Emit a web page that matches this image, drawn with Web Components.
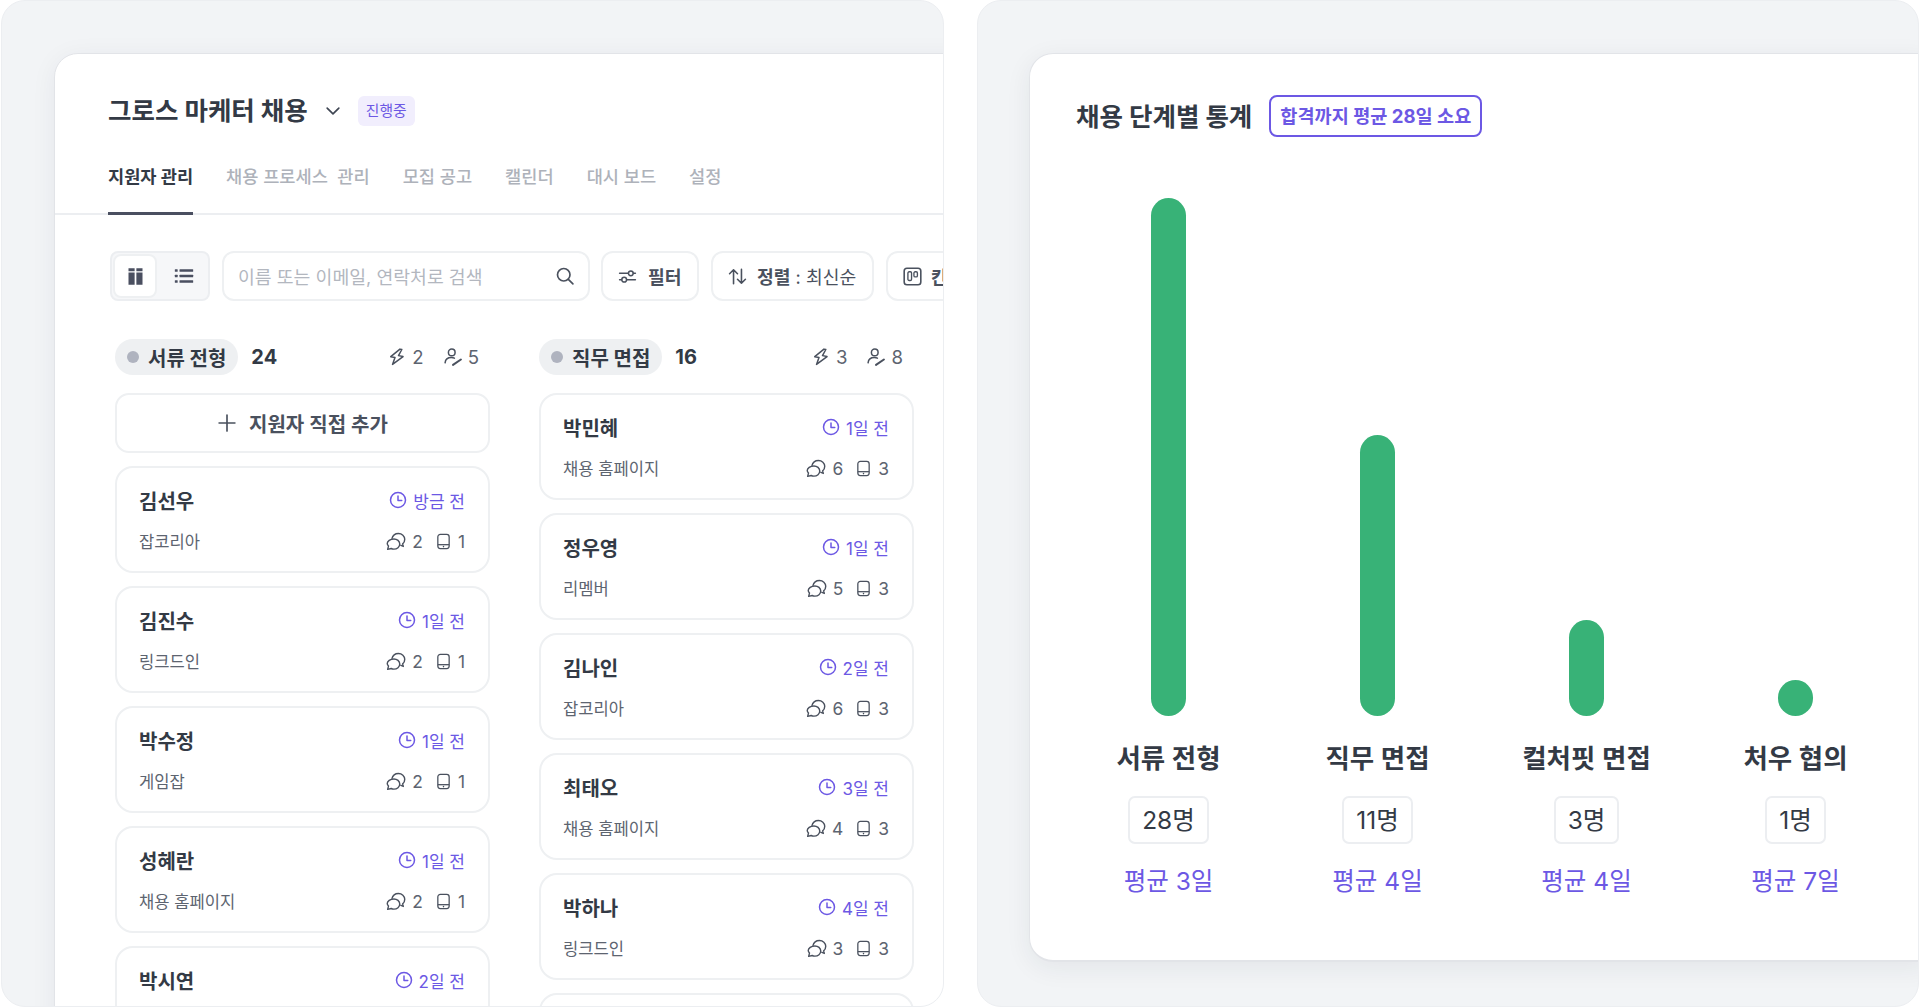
<!DOCTYPE html>
<html lang="ko">
<head>
<meta charset="utf-8">
<title>채용</title>
<style>
    html,body{margin:0;height:100%;background:#fff;overflow:hidden;}
    body{font-family:Inter,"Noto Sans CJK KR",sans-serif;color:#333a45;}
    main{display:flex;gap:33px;height:1007px;padding:0 1px 0 1px;box-sizing:border-box;}
</style>
</head>
<body>
<main>
    <frame-panel style="width:943px">
        <recruit-board></recruit-board>
    </frame-panel>
    <frame-panel style="flex:1">
        <stage-chart></stage-chart>
    </frame-panel>
</main>

<script>
const icons={
    chevron:'<path d="M5 8.5l7 7 7-7" fill="none" stroke="currentColor" stroke-width="2" stroke-linecap="round" stroke-linejoin="round"/>',
    columns:'<path fill="currentColor" d="M4 2.500h7v3.600H4zM4 7.300h7v14.200H4zM13 2.500h7v3.600h-7zM13 7.300h7v14.200h-7z"/>',
    list:'<g fill="currentColor"><rect x="1" y="4" width="3.400" height="2.800" rx=".6"/><rect x="1" y="10.600" width="3.400" height="2.800" rx=".6"/><rect x="1" y="17.200" width="3.400" height="2.800" rx=".6"/><rect x="6.600" y="4" width="16.400" height="2.800" rx=".6"/><rect x="6.600" y="10.600" width="16.400" height="2.800" rx=".6"/><rect x="6.600" y="17.200" width="16.400" height="2.800" rx=".6"/></g>',
    search:'<g fill="none" stroke="currentColor" stroke-width="2" stroke-linecap="round"><circle cx="10.500" cy="10.500" r="7.500"/><path d="M16 16l5.500 5.500"/></g>',
    filter:'<g fill="none" stroke="currentColor" stroke-width="1.900" stroke-linecap="round"><path d="M2 8h11M19.500 8H22M2 16h2.500M11 16h11"/><circle cx="16.200" cy="8" r="3"/><circle cx="7.800" cy="16" r="3"/></g>',
    sort:'<g fill="none" stroke="currentColor" stroke-width="2" stroke-linecap="round" stroke-linejoin="round"><path d="M7 21V3.500M2 8.500l5-5 5 5M17 3v17.500M12 15.500l5 5 5-5"/></g>',
    kanban:'<g fill="none" stroke="currentColor" stroke-width="2"><rect x="1.500" y="1.500" width="21" height="21" rx="3.500"/><rect x="6.200" y="6" width="4.600" height="11" rx="1.600" stroke-width="1.700"/><rect x="13.800" y="6" width="4.400" height="6.500" rx="1.600" stroke-width="1.700"/></g>',
    plus:'<path d="M12 2.500v19M2.500 12h19" fill="none" stroke="currentColor" stroke-width="2" stroke-linecap="round"/>',
    bolt:'<path d="M13.500 2L4.600 13.200h5.200L8.600 21.800 19 10h-5.600l2.400-8z" transform="rotate(12 12 12)" fill="none" stroke="currentColor" stroke-width="1.800" stroke-linejoin="round"/>',
    person:'<g fill="none" stroke="currentColor" stroke-width="1.800" stroke-linecap="round"><circle cx="10.500" cy="6.500" r="4"/><path d="M2.500 19c.4-4 3.400-6.300 7.500-6.300 1.400 0 2.600.2 3.700.7"/><path d="M12 21.500l9.500-6.500" stroke-width="2.400"/></g>',
    clock:'<g fill="none" stroke="currentColor" stroke-width="2" stroke-linecap="round" stroke-linejoin="round"><circle cx="12" cy="12" r="10"/><path d="M12 6.500V12.500h5"/></g>',
    chat:'<g fill="none" stroke="currentColor" stroke-width="1.700" stroke-linejoin="round"><path d="M7 9.500C8 5.500 11.500 3 15 3c4 0 7.500 3 7.500 7 0 2.300-1 4.300-2.500 5.500l.8 3-3.600-1.500"/><path d="M9.500 9.500c3.800 0 7 2.700 7 6.200s-3.200 6-7 6c-1.200 0-2.300-.2-3.300-.7L2 22l1-3.900c-1-.9-1.500-2.200-1.500-3 0-3 3.600-5.600 8-5.600z"/></g>',
    phone:'<g fill="none" stroke="currentColor" stroke-width="1.800"><rect x="4" y="2" width="16" height="20" rx="3.500"/><path d="M4 16.500h16"/></g><circle cx="12" cy="19.200" r="1.100" fill="currentColor"/>'
};

function define(name,render){
    customElements.define(name,class extends HTMLElement{
        constructor(){
            super();
            this.attachShadow({mode:'open'});
        }
        connectedCallback(){
            this.shadowRoot.innerHTML=render(this.dataset);
        }
    });
}

define('ui-icon',(d)=>`
    <style>
        :host{display:inline-flex;flex:none;width:${d.size||18}px;height:${d.size||18}px;}
        svg{width:100%;height:100%;display:block;}
    </style>
    <svg viewBox="0 0 24 24" aria-hidden="true">${icons[d.name]}</svg>
`);

define('frame-panel',()=>`
    <style>
        :host{
            display:block;box-sizing:border-box;height:1007px;
            background:#f2f4f6;border:1px solid #eceef1;border-radius:24px;
            overflow:hidden;padding:52px 0 0 52px;
        }
        :host(:last-of-type){padding-left:51px;}
    </style>
    <slot></slot>
`);

define('tool-button',(d)=>`
    <style>
        :host{
            display:flex;flex:none;align-items:center;gap:${d.gap||11}px;box-sizing:border-box;
            width:${d.width||'auto'};height:50px;padding:0 15px;background:#fff;
            border:2px solid #eef0f2;border-radius:12px;
            font-size:18.200px;color:#4a515e;white-space:nowrap;
        }
        b{font-weight:700;}
    </style>
    <ui-icon data-name="${d.icon}" data-size="${d.iconsize||19}"></ui-icon>
    <span><b>${d.label}</b>${d.rest||''}</span>
`);

define('view-toggle',()=>`
    <style>
        :host{
            display:flex;flex:none;box-sizing:border-box;width:100px;height:50px;padding:1px;
            background:#f6f7f9;border:2px solid #eceef1;border-radius:8px;color:#4a4f60;
        }
        div{display:flex;align-items:center;justify-content:center;box-sizing:border-box;width:44px;}
        .on{background:#fff;border:2px solid #eef0f2;border-radius:8px;}
        .off{width:50px;padding-left:3px;}
    </style>
    <div class="on"><ui-icon data-name="columns" data-size="21"></ui-icon></div>
    <div class="off"><ui-icon data-name="list" data-size="20"></ui-icon></div>
`);

define('search-box',()=>`
    <style>
        :host{
            display:flex;flex:none;align-items:center;justify-content:space-between;box-sizing:border-box;
            width:368px;height:50px;margin-right:-1px;padding:0 13px 0 14px;background:#fff;
            border:2px solid #eef0f2;border-radius:12px;
            font-size:18.300px;color:#b3b7bf;white-space:nowrap;
        }
        ui-icon{color:#4a515e;}
    </style>
    <span>이름 또는 이메일, 연락처로 검색</span>
    <ui-icon data-name="search" data-size="20"></ui-icon>
`);

define('applicant-card',(d)=>`
    <style>
        :host{
            display:flex;flex:none;flex-direction:column;box-sizing:border-box;height:107px;
            padding:17px 23px 0 22px;background:#fff;border:2px solid #eef0f2;border-radius:18px;
        }
        div{display:flex;align-items:center;justify-content:space-between;height:30px;}
        .second{margin-top:11px;}
        b{font-size:20px;font-weight:700;color:#333a45;}
        .time{display:flex;align-items:center;gap:6px;font-size:17px;color:#6c58e4;}
        .source{font-size:16.600px;color:#5d6470;}
        .meta{display:flex;align-items:center;font-size:17.400px;color:#5d6470;}
        .meta ui-icon{color:#4a515e;}
        .meta span{margin-left:6px;}
        .meta span:nth-of-type(1){margin-right:12px;}
    </style>
    <div>
        <b>${d.name}</b>
        <span class="time"><ui-icon data-name="clock" data-size="18"></ui-icon>${d.time}</span>
    </div>
    <div class="second">
        <span class="source">${d.source}</span>
        <span class="meta">
            <ui-icon data-name="chat" data-size="20"></ui-icon><span>${d.chat}</span>
            <ui-icon data-name="phone" data-size="17"></ui-icon><span>${d.doc}</span>
        </span>
    </div>
`);

define('add-card',()=>`
    <style>
        :host{
            display:flex;flex:none;align-items:center;justify-content:center;gap:12px;box-sizing:border-box;height:60px;
            background:#fff;border:2px solid #eef0f2;border-radius:14px;
            font-size:20px;font-weight:600;color:#4a515e;
        }
    </style>
    <ui-icon data-name="plus" data-size="20"></ui-icon>
    <span>지원자 직접 추가</span>
`);

define('board-column',(d)=>`
    <style>
        :host{display:flex;flex:none;flex-direction:column;width:375px;}
        header{display:flex;align-items:center;height:36px;margin-bottom:18px;padding-right:11px;}
        .chip{
            display:flex;align-items:center;gap:9px;height:36px;padding:0 12px 0 12px;
            background:#eef0f2;border-radius:18px;font-size:20px;font-weight:700;color:#333a45;
        }
        .dot{width:12px;height:12px;border-radius:50%;background:#afb3bf;}
        .count{margin-left:13px;font-size:20px;font-weight:700;color:#333a45;}
        .stats{display:flex;align-items:center;margin-left:auto;font-size:18.600px;color:#5d6470;}
        .stats ui-icon{color:#4a515e;}
        .stats span{margin-left:5px;}
        .stats span:nth-of-type(1){margin-right:19px;}
        .list{display:flex;flex-direction:column;gap:13px;}
    </style>
    <header>
        <div class="chip"><i class="dot"></i>${d.label}</div>
        <div class="count">${d.count}</div>
        <div class="stats">
            <ui-icon data-name="bolt" data-size="20"></ui-icon><span>${d.bolt}</span>
            <ui-icon data-name="person" data-size="20"></ui-icon><span>${d.person}</span>
        </div>
    </header>
    <div class="list"><slot></slot></div>
`);

function card(name,time,source,chat,doc){
    return `<applicant-card data-name="${name}" data-time="${time}" data-source="${source}" data-chat="${chat}" data-doc="${doc}"></applicant-card>`;
}

const firstColumn=[
    ['김선우','방금 전','잡코리아',2,1],
    ['김진수','1일 전','링크드인',2,1],
    ['박수정','1일 전','게임잡',2,1],
    ['성혜란','1일 전','채용 홈페이지',2,1],
    ['박시연','2일 전','잡코리아',2,1]
];
const secondColumn=[
    ['박민혜','1일 전','채용 홈페이지',6,3],
    ['정우영','1일 전','리멤버',5,3],
    ['김나인','2일 전','잡코리아',6,3],
    ['최태오','3일 전','채용 홈페이지',4,3],
    ['박하나','4일 전','링크드인',3,3],
    ['이서준','5일 전','잡코리아',3,3]
];

define('recruit-board',()=>`
    <style>
        :host{
            display:block;box-sizing:border-box;width:1000px;height:1100px;background:#fff;
            border:1px solid #e2e4e8;border-radius:24px 0 0 0;
            box-shadow:0 4px 26px rgba(30,40,60,.06);
        }
        .title{display:flex;align-items:center;height:46px;margin:34px 0 0 53px;}
        h1{margin:0;font-size:25.500px;font-weight:700;line-height:46px;color:#333a45;}
        .title ui-icon{margin-left:15px;color:#3f4653;}
        .tag{
            margin-left:15px;padding:0 8px;height:30px;line-height:30px;border-radius:6px;
            background:#f1eefd;color:#6c58e4;font-size:14.800px;
        }
        nav{display:flex;gap:33px;box-sizing:border-box;margin-top:31px;padding-left:53px;height:50px;border-bottom:2px solid #eceef1;}
        nav a{
            box-sizing:border-box;height:50px;line-height:24px;
            font-size:17.600px;font-weight:500;color:#aeb2ba;white-space:pre;
        }
        nav a.on{font-weight:700;color:#333a45;border-bottom:3px solid #4a4f60;}
        .tools{display:flex;gap:12px;margin-top:36px;padding-left:55px;}
        .columns{display:flex;gap:49px;margin-top:38px;padding-left:60px;}
    </style>
    <div class="title">
        <h1>그로스 마케터 채용</h1>
        <ui-icon data-name="chevron" data-size="20"></ui-icon>
        <span class="tag">진행중</span>
    </div>
    <nav>
        <a class="on">지원자 관리</a>
        <a>채용 프로세스&nbsp; 관리</a>
        <a>모집 공고</a>
        <a>캘린더</a>
        <a>대시 보드</a>
        <a>설정</a>
    </nav>
    <div class="tools">
        <view-toggle></view-toggle>
        <search-box></search-box>
        <tool-button data-icon="filter" data-label="필터" data-width="98px"></tool-button>
        <tool-button data-icon="sort" data-label="정렬" data-rest=" : 최신순" data-gap="10" data-width="163px"></tool-button>
        <tool-button data-icon="kanban" data-label="칸반 보기" data-gap="9"></tool-button>
    </div>
    <div class="columns">
        <board-column data-label="서류 전형" data-count="24" data-bolt="2" data-person="5">
            <add-card></add-card>
            ${firstColumn.map((c)=>card(...c)).join('')}
        </board-column>
        <board-column data-label="직무 면접" data-count="16" data-bolt="3" data-person="8">
            ${secondColumn.map((c)=>card(...c)).join('')}
        </board-column>
    </div>
`);

define('stage-bar',(d)=>`
    <style>
        :host{display:flex;flex-direction:column;align-items:center;justify-content:flex-end;}
        .bar{width:35px;height:${d.height}px;border-radius:18px;background:#38b277;}
        .label{margin-top:24px;line-height:36px;font-size:26.500px;font-weight:600;color:#333a45;white-space:nowrap;}
        .count{
            box-sizing:border-box;height:48px;line-height:44px;margin-top:20px;padding:0 12px;
            border:2px solid #eceef1;border-radius:7px;font-size:24.500px;color:#333a45;
        }
        .avg{margin:21px 0 1px;line-height:32px;font-size:24.500px;color:#6c58e4;white-space:nowrap;}
    </style>
    <div class="bar"></div>
    <div class="label">${d.label}</div>
    <div class="count">${d.count}</div>
    <div class="avg">${d.avg}</div>
`);

define('stage-chart',()=>`
    <style>
        :host{
            display:block;box-sizing:border-box;width:900px;height:909px;background:#fff;
            border:1px solid #e2e4e8;border-bottom-width:2px;border-radius:24px 0 0 24px;
            box-shadow:0 6px 26px rgba(30,40,60,.07);
            padding:41px 0 0 0;
        }
        .head{display:flex;align-items:center;height:42px;padding-left:46px;}
        h2{margin:0 0 4px;font-size:25.500px;font-weight:700;color:#333a45;}
        .badge{
            box-sizing:border-box;height:42px;line-height:38px;margin-left:17px;padding:0 9px;
            border:2px solid #6c58e4;border-radius:8px;
            font-size:18.600px;font-weight:700;color:#6c58e4;white-space:nowrap;
        }
        .bars{display:grid;grid-template-columns:repeat(4,209px);align-items:end;height:761px;padding-left:34px;}
    </style>
    <div class="head">
        <h2>채용 단계별 통계</h2>
        <span class="badge">합격까지 평균 28일 소요</span>
    </div>
    <div class="bars">
        <stage-bar data-height="518" data-label="서류 전형" data-count="28명" data-avg="평균 3일"></stage-bar>
        <stage-bar data-height="281" data-label="직무 면접" data-count="11명" data-avg="평균 4일"></stage-bar>
        <stage-bar data-height="96" data-label="컬처핏 면접" data-count="3명" data-avg="평균 4일"></stage-bar>
        <stage-bar data-height="36" data-label="처우 협의" data-count="1명" data-avg="평균 7일"></stage-bar>
    </div>
`);
</script>
</body>
</html>
